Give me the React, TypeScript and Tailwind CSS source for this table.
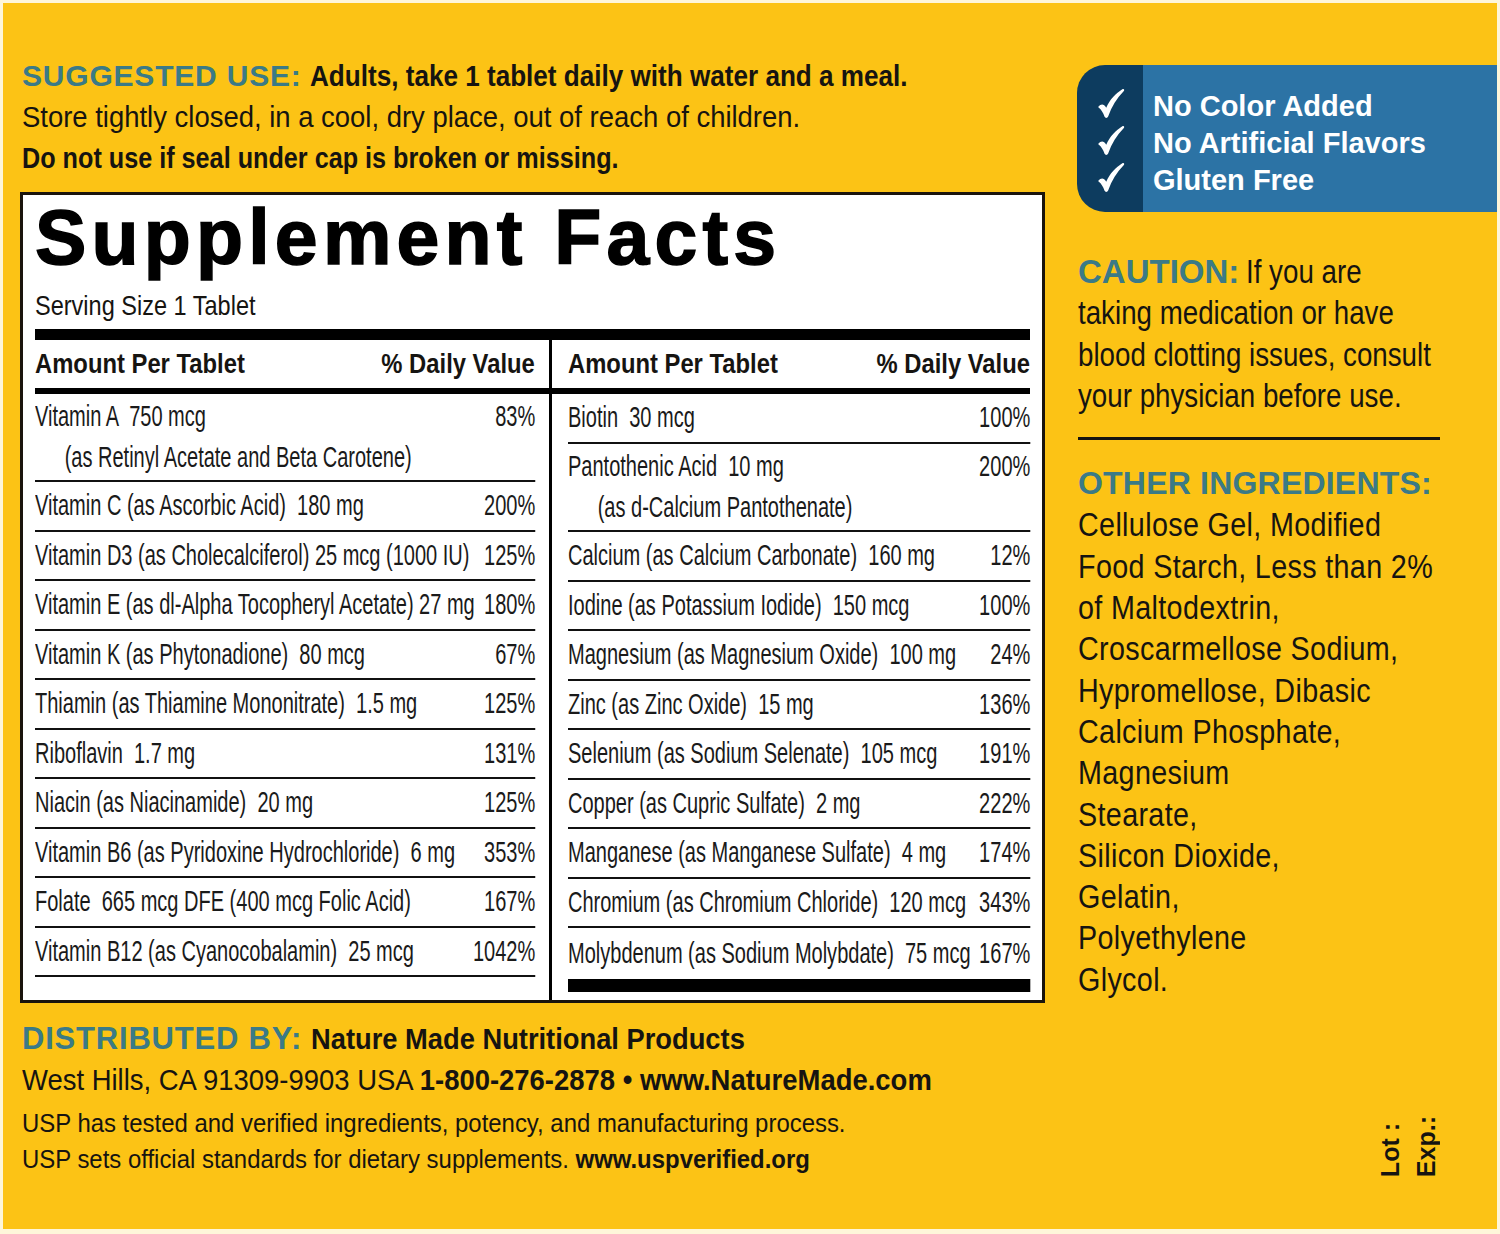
import type { ReactNode } from "react";

const sans = "font-['Liberation_Sans',Arial,sans-serif]";

type Nutrient = { name: string; sub?: string; dv: string };

const leftRows: Nutrient[] = [
  { name: "Vitamin A  750 mcg", sub: "(as Retinyl Acetate and Beta Carotene)", dv: "83%" },
  { name: "Vitamin C (as Ascorbic Acid)  180 mg", dv: "200%" },
  { name: "Vitamin D3 (as Cholecalciferol) 25 mcg (1000 IU)", dv: "125%" },
  { name: "Vitamin E (as dl-Alpha Tocopheryl Acetate) 27 mg", dv: "180%" },
  { name: "Vitamin K (as Phytonadione)  80 mcg", dv: "67%" },
  { name: "Thiamin (as Thiamine Mononitrate)  1.5 mg", dv: "125%" },
  { name: "Riboflavin  1.7 mg", dv: "131%" },
  { name: "Niacin (as Niacinamide)  20 mg", dv: "125%" },
  { name: "Vitamin B6 (as Pyridoxine Hydrochloride)  6 mg", dv: "353%" },
  { name: "Folate  665 mcg DFE (400 mcg Folic Acid)", dv: "167%" },
  { name: "Vitamin B12 (as Cyanocobalamin)  25 mcg", dv: "1042%" },
];

const rightRows: Nutrient[] = [
  { name: "Biotin  30 mcg", dv: "100%" },
  { name: "Pantothenic Acid  10 mg", sub: "(as d-Calcium Pantothenate)", dv: "200%" },
  { name: "Calcium (as Calcium Carbonate)  160 mg", dv: "12%" },
  { name: "Iodine (as Potassium Iodide)  150 mcg", dv: "100%" },
  { name: "Magnesium (as Magnesium Oxide)  100 mg", dv: "24%" },
  { name: "Zinc (as Zinc Oxide)  15 mg", dv: "136%" },
  { name: "Selenium (as Sodium Selenate)  105 mcg", dv: "191%" },
  { name: "Copper (as Cupric Sulfate)  2 mg", dv: "222%" },
  { name: "Manganese (as Manganese Sulfate)  4 mg", dv: "174%" },
  { name: "Chromium (as Chromium Chloride)  120 mcg", dv: "343%" },
  { name: "Molybdenum (as Sodium Molybdate)  75 mcg", dv: "167%" },
];

const ingredients = [
  "Cellulose Gel, Modified",
  "Food Starch, Less than 2%",
  "of Maltodextrin,",
  "Croscarmellose Sodium,",
  "Hypromellose, Dibasic",
  "Calcium Phosphate,",
  "Magnesium",
  "Stearate,",
  "Silicon Dioxide,",
  "Gelatin,",
  "Polyethylene",
  "Glycol.",
];

// condensed look: squeeze a run of text horizontally from its left edge
function Sq({ className, children }: { className: string; children: ReactNode }) {
  return <span className={`inline-block origin-left whitespace-pre ${className}`}>{children}</span>;
}

function Row({ r, last, tall }: { r: Nutrient; last?: boolean; tall?: boolean }) {
  if (r.sub) {
    return (
      <div className="h-[88px] pt-[2px] border-b-2 border-[#111]">
        <div className="flex justify-between leading-[41px]">
          <span className="whitespace-pre">{r.name}</span>
          <span>{r.dv}</span>
        </div>
        <div className="pl-[43px] leading-[41px] whitespace-pre">{r.sub}</div>
      </div>
    );
  }
  return (
    <div
      className={
        last
          ? "flex justify-between items-center h-[51px]"
          : tall
          ? "flex justify-between items-center h-[50px] border-b-2 border-[#111]"
          : "flex justify-between items-center h-[49.5px] border-b-2 border-[#111]"
      }
    >
      <span className="whitespace-pre">{r.name}</span>
      <span>{r.dv}</span>
    </div>
  );
}

function Check() {
  return (
    <svg width="30" height="31" viewBox="0 0 24 26" className="block">
      <path
        d="M1.5 15.5 C3.5 13.2 6 13 8 16.5 C11 9.5 16 4.5 21.5 1 C23 0.4 23.6 1.6 22.6 2.8 C16.8 8.5 12.6 15.5 9.6 24 C9 25.4 7.2 25.4 6.6 24.2 C5.4 20.6 3.8 18.2 1.8 16.6 C1.3 16.2 1.2 15.9 1.5 15.5 Z"
        fill="#fff"
      />
    </svg>
  );
}

export default function App() {
  return (
    <div className={`w-[1500px] h-[1234px] bg-[#FEF6DA] pt-[3px] pl-[3px] pr-[3px] pb-[5px] ${sans}`}>
      <div className="h-full bg-[#FCC315] flex pl-[17px] text-[#161411] overflow-hidden">
        {/* Left column */}
        <div className="w-[1025px] shrink-0 flex flex-col">
          <div className="mt-[52px] ml-[2px] text-[30px] leading-[41px] whitespace-nowrap">
            <div className="flex">
              <span className="font-bold text-[#3B7A86] tracking-[0.8px]">SUGGESTED USE:</span>
              <Sq className="ml-[8px] font-bold scale-x-[0.87]">Adults, take 1 tablet daily with water and a meal.</Sq>
            </div>
            <div>
              <Sq className="scale-x-[0.915]">Store tightly closed, in a cool, dry place, out of reach of children.</Sq>
            </div>
            <div>
              <Sq className="font-bold scale-x-[0.84]">Do not use if seal under cap is broken or missing.</Sq>
            </div>
          </div>

          {/* Supplement Facts box */}
          <div className="mt-[14px] h-[811px] bg-white border-[3px] border-[#1a140c] px-[12px] pt-[4px] flex flex-col">
            <div className="font-black text-[77px] leading-none tracking-[5.2px] text-black whitespace-nowrap [-webkit-text-stroke:1.5px_black]">
              Supplement Facts
            </div>
            <div className="text-[28px] leading-[34px] mt-[13px]">
              <Sq className="scale-x-[0.84]">Serving Size 1 Tablet</Sq>
            </div>
            <div className="mt-[6px] h-[11px] bg-black" />

            <div className="flex h-[48px] text-[28px] font-bold">
              <div className="w-[500px] shrink-0">
                <div className="w-[588px] h-full origin-left scale-x-[0.85] flex justify-between items-center">
                  <span>Amount Per Tablet</span>
                  <span>% Daily Value</span>
                </div>
              </div>
              <div className="ml-[14px] mr-[16px] w-[3px] bg-black" />
              <div className="w-[462px] shrink-0">
                <div className="w-[543.5px] h-full origin-left scale-x-[0.85] flex justify-between items-center">
                  <span>Amount Per Tablet</span>
                  <span>% Daily Value</span>
                </div>
              </div>
            </div>
            <div className="h-[6px] bg-black" />

            <div className="flex flex-1 text-[29px] text-[#1a1a1a]">
              <div className="w-[500px] shrink-0">
                <div className="w-[725px] origin-left scale-x-[0.69]">
                  {leftRows.map((r) => (
                    <Row key={r.name} r={r} />
                  ))}
                </div>
              </div>
              <div className="ml-[14px] mr-[16px] w-[3px] bg-black" />
              <div className="w-[462px] shrink-0">
                <div className="w-[670px] origin-left scale-x-[0.69]">
                  {rightRows.map((r, i) => (
                    <Row key={r.name} r={r} tall={i === 0} last={i === rightRows.length - 1} />
                  ))}
                  <div className="h-[13px] bg-black" />
                </div>
              </div>
            </div>
          </div>

          <div className="mt-[15px] ml-[2px] whitespace-nowrap">
            <div className="flex text-[30px] leading-[41px]">
              <span className="font-bold text-[#3B7A86] text-[31px] tracking-[0.8px]">DISTRIBUTED BY:</span>
              <Sq className="ml-[9px] font-bold scale-x-[0.91]">Nature Made Nutritional Products</Sq>
            </div>
            <div className="text-[30px] leading-[41px]">
              <Sq className="scale-x-[0.915]">
                West Hills, CA 91309-9903 USA <span className="font-bold">1-800-276-2878 • www.NatureMade.com</span>
              </Sq>
            </div>
            <div className="mt-[5px] text-[26px] leading-[36px]">
              <div>
                <Sq className="scale-x-[0.92]">USP has tested and verified ingredients, potency, and manufacturing process.</Sq>
              </div>
              <div>
                <Sq className="scale-x-[0.92]">
                  USP sets official standards for dietary supplements. <span className="font-bold">www.uspverified.org</span>
                </Sq>
              </div>
            </div>
          </div>
        </div>

        {/* Right column */}
        <div className="ml-[32px] flex-1 min-w-0 flex flex-col">
          <div className="mt-[62px] h-[147px] flex rounded-l-[28px] overflow-hidden">
            <div className="w-[66px] bg-[#0D3C5F] flex flex-col items-center pt-[23px] gap-[6px] pl-[2px]">
              <Check />
              <Check />
              <Check />
            </div>
            <div className="flex-1 bg-[#2C73A5] pl-[10px] pt-[23px] font-bold text-white text-[29px] leading-[37px] whitespace-nowrap">
              <div>No Color Added</div>
              <div>No Artificial Flavors</div>
              <div>Gluten Free</div>
            </div>
          </div>

          <div className="mt-[39px] ml-[1px] text-[33px] leading-[41.3px] whitespace-nowrap">
            <div className="flex">
              <span className="font-bold text-[#3B7A86]">CAUTION:</span>
              <Sq className="ml-[7px] scale-x-[0.84]">If you are</Sq>
            </div>
            <div>
              <Sq className="scale-x-[0.84]">taking medication or have</Sq>
            </div>
            <div>
              <Sq className="scale-x-[0.84]">blood clotting issues, consult</Sq>
            </div>
            <div>
              <Sq className="scale-x-[0.84]">your physician before use.</Sq>
            </div>
          </div>

          <div className="mt-[21px] ml-[1px] w-[362px] h-[3px] bg-[#161411]" />

          <div className="mt-[23px] ml-[1px] font-bold text-[#3B7A86] text-[32px] leading-[41.3px] tracking-[0.2px] whitespace-nowrap">
            OTHER INGREDIENTS:
          </div>
          <div className="ml-[1px] text-[33px] leading-[41.3px] whitespace-nowrap">
            {ingredients.map((l) => (
              <div key={l}>
                <Sq className="scale-x-[0.87] tracking-[0.4px]">{l}</Sq>
              </div>
            ))}
          </div>

          <div className="mt-auto mb-[52px] self-end mr-[53px] font-bold text-[25px] leading-[36px] [writing-mode:vertical-rl] rotate-180">
            <div>Lot :</div>
            <div>Exp.:</div>
          </div>
        </div>
      </div>
    </div>
  );
}
